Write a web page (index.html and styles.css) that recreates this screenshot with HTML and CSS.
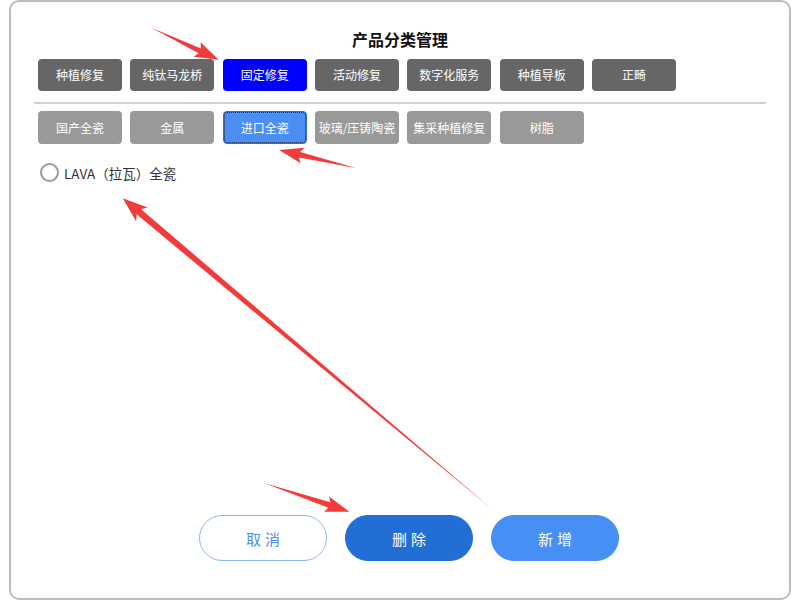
FILE: index.html
```html
<!DOCTYPE html>
<html lang="zh">
<head>
<meta charset="utf-8">
<title>产品分类管理</title>
<link rel="stylesheet" href="styles.css">
</head>
<body>
<div class="card">
  <h1 class="title">产品分类管理</h1>
  <div class="tabs primary">
    <button class="tab">种植修复</button>
    <button class="tab">纯钛马龙桥</button>
    <button class="tab active">固定修复</button>
    <button class="tab">活动修复</button>
    <button class="tab">数字化服务</button>
    <button class="tab">种植导板</button>
    <button class="tab">正畸</button>
  </div>
  <div class="divider"></div>
  <div class="tabs secondary">
    <button class="tab">国产全瓷</button>
    <button class="tab">金属</button>
    <button class="tab active">进口全瓷</button>
    <button class="tab">玻璃/压铸陶瓷</button>
    <button class="tab">集采种植修复</button>
    <button class="tab">树脂</button>
  </div>
  <label class="radio-row">
    <span class="radio"></span>
    <span class="radio-label">LAVA（拉瓦）全瓷</span>
  </label>
  <div class="actions">
    <button class="btn btn-cancel">取消</button>
    <button class="btn btn-delete">删除</button>
    <button class="btn btn-add">新增</button>
  </div>
</div>
<svg class="annotations" width="800" height="600" viewBox="0 0 800 600">
  <g fill="#f23c3c">
    <polygon transform="translate(152 28) rotate(25.5)" points="0,0 53,-2.6 50,-8 74,0 50,8 53,2.6"/>
    <polygon transform="translate(356 168) rotate(193.2)" points="0,0 58,-2.8 55,-8 79,0 55,8 58,2.8"/>
    <polygon transform="translate(493 510) rotate(220.1)" points="0,0 463,-3.4 459,-9 484,0 459,9 463,3.4"/>
    <polygon transform="translate(264 483) rotate(18.6)" points="0,0 69,-2.8 66,-8 90,0 66,8 69,2.8"/>
  </g>
</svg>
</body>
</html>
```
FILE: styles.css
```css
* { box-sizing: border-box; }
html, body { margin: 0; padding: 0; background: #fff; }
body {
  width: 800px;
  height: 600px;
  position: relative;
  font-family: "Noto Sans CJK SC", "Noto Sans", sans-serif;
  overflow: hidden;
}
.card {
  margin-left: 9px;
  width: 782px;
  height: 600px;
  border: 2px solid #bdbdbd;
  border-radius: 10px;
  display: flex;
  flex-direction: column;
  padding: 27px 0 37px 0;
}
.title {
  margin: 0;
  font-size: 16px;
  line-height: 20px;
  font-weight: 700;
  text-align: center;
  color: #111;
}
.tabs {
  display: flex;
  gap: 8.33px;
  padding-left: 27px;
}
.primary { margin-top: 10px; }
.secondary { margin-top: 7px; }
.tab {
  width: 84px;
  height: 32px;
  border: none;
  border-radius: 4px;
  background: #666;
  color: #fff;
  font-family: inherit;
  font-size: 12px;
  padding: 0;
  line-height: 32px;
  white-space: nowrap;
}
.primary .tab.active { background: #0000ff; }
.secondary .tab { background: #999; height: 33px; }
.secondary .tab.active {
  background: #4a8ef3;
  outline: 1px dotted #1a2a4a;
  outline-offset: -2px;
  border: 1px solid #2f6fd0;
}
.divider {
  margin: 11px 23px 0 23px;
  height: 2px;
  background: #d0d0d0;
}
.radio-row {
  display: flex;
  align-items: center;
  margin-top: 19px;
  padding-left: 29px;
  height: 19px;
}
.radio {
  width: 19px;
  height: 19px;
  border: 2px solid #9a9a9a;
  border-radius: 50%;
  flex: none;
}
.radio-label {
  margin-left: 5px;
  font-size: 13.5px;
  color: #333;
}
.actions {
  margin-top: auto;
  display: flex;
  gap: 18px;
  padding-left: 188px;
}
.btn {
  width: 128px;
  height: 46px;
  border-radius: 23px;
  font-family: inherit;
  font-size: 15px;
  letter-spacing: 4px;
  text-indent: 4px;
  padding: 0;
  border: 1px solid transparent;
  color: #fff;
}
.btn-cancel {
  background: #fff;
  border-color: #8db6f5;
  color: #4a8ef0;
}
.btn-delete { background: #236ed5; border-color: #236ed5; }
.btn-add { background: #4690f5; border-color: #4690f5; }
.annotations {
  position: absolute;
  top: 0;
  left: 0;
  pointer-events: none;
}
```
